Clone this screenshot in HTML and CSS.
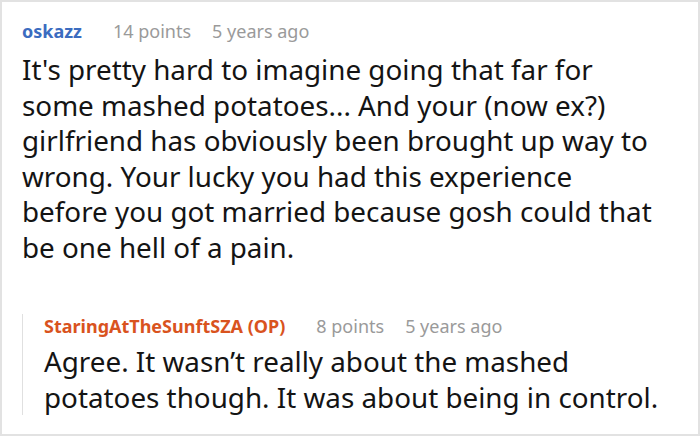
FILE: index.html
```html
<!DOCTYPE html>
<html>
<head>
<meta charset="utf-8">
<link rel="stylesheet" href="styles.css">
</head>
<body>
<div class="frame">
  <div class="comment">
    <div class="meta">
      <span class="user">oskazz</span>
      <span class="info">14 points</span>
      <span class="info">5 years ago</span>
    </div>
    <p class="text">It's pretty hard to imagine going that far for some mashed potatoes... And your (now ex?) girlfriend has obviously been brought up way to wrong. Your lucky you had this experience before you got married because gosh could that be one hell of a pain.</p>
  </div>
  <div class="reply">
    <div class="meta">
      <span class="user op">StaringAtTheSunftSZA (OP)</span>
      <span class="info">8 points</span>
      <span class="info">5 years ago</span>
    </div>
    <p class="text">Agree. It wasn’t really about the mashed potatoes though. It was about being in control.</p>
  </div>
</div>
</body>
</html>
```
FILE: styles.css
```css
html, body {
  margin: 0;
  padding: 0;
  background: #fff;
}
.frame {
  width: 700px;
  height: 436px;
  box-sizing: border-box;
  border: 2px solid #e2e2e2;
  padding: 17px 40px 0 20px;
  font-family: "Noto Sans", sans-serif;
  overflow: hidden;
}
.meta {
  display: flex;
  gap: 21px;
  font-size: 18px;
  line-height: 24px;
  white-space: nowrap;
}
.user {
  font-weight: 700;
  color: #3b6cc0;
  margin-right: 10px;
}
.user.op {
  color: #d9531e;
}
.info {
  color: #9a9a9a;
}
.text {
  margin: 9px 0 0 0;
  font-size: 27.8px;
  line-height: 35.5px;
  color: #141414;
}
.reply {
  margin-top: 59px;
  margin-right: -14px;
  border-left: 1px solid #e0e0e0;
  padding-left: 21px;
}
.reply .meta {
  margin-top: -10px;
}
.reply .text {
  margin-top: 6px;
}
```
